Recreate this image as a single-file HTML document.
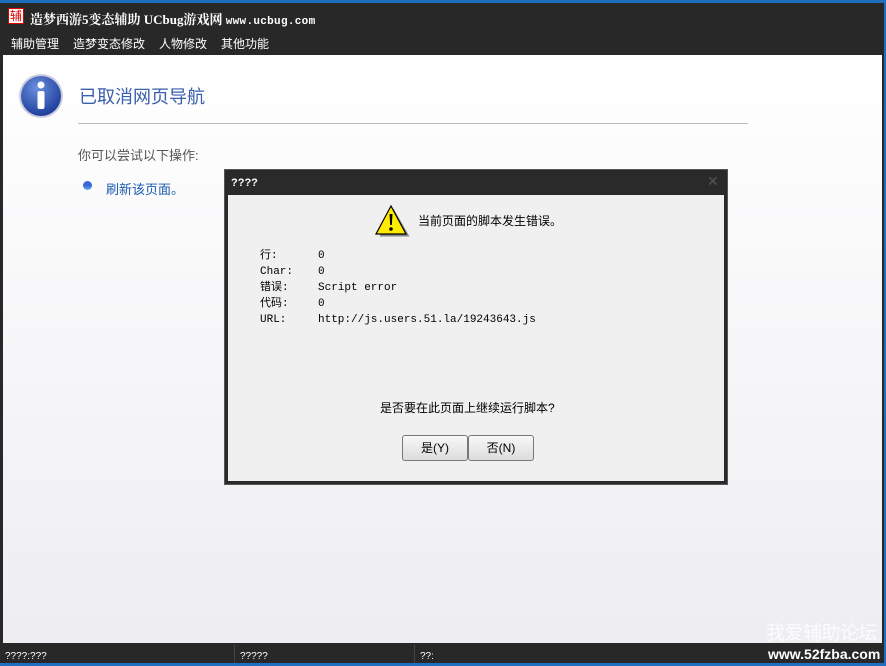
<!DOCTYPE html>
<html><head><meta charset="utf-8"><style>
*{margin:0;padding:0;box-sizing:border-box}
body{width:886px;height:666px;position:relative;overflow:hidden;background:#1e6fc0;font-family:"Liberation Sans","Noto Sans CJK SC",sans-serif}
.abs{position:absolute}
#win{left:0;top:3px;width:884px;height:660px;background:#282828}
#title{left:30px;top:9px;color:#fff;font-size:13px;font-weight:bold;font-family:"Liberation Serif","Noto Serif CJK SC",serif;white-space:nowrap}
#menu{left:11px;top:35px;color:#fff;font-size:12px;white-space:nowrap}
#menu span{margin-right:14px}
#content{left:3px;top:55px;width:879px;height:588px;background:linear-gradient(#fff,#eeeef2)}
#status{top:643px;height:20px;left:0;width:884px;color:#fff;font-size:10px}
.sb{position:absolute;top:8px}
.sep{position:absolute;top:2px;width:1px;height:18px;background:#444}
#dlg{left:224px;top:169px;width:504px;height:316px;background:#2a2a2a;border:1px solid #555}
#dbody{left:3px;top:25px;width:496px;height:286px;background:#f0f0f0}
.m{font-family:"Liberation Mono","Noto Sans CJK SC",monospace;font-size:11px;color:#000}
.btn{position:absolute;top:240px;width:66px;height:26px;border:1px solid #777;border-radius:3px;background:linear-gradient(#f8f8f8,#dcdcdc);font-size:12px;text-align:center;line-height:24px}
</style></head><body>
<div id="win" class="abs"></div>
<div class="abs" style="left:8px;top:8px;width:16px;height:16px;border:1px solid #d00;background:#fff;color:#d00;font-size:12px;line-height:14px;text-align:center">辅</div>
<div id="title" class="abs">造梦西游5变态辅助 UCbug游戏网 <span style="font-family:'Liberation Mono',monospace;font-size:11px;letter-spacing:0.3px">www.ucbug.com</span></div>
<div id="menu" class="abs"><span>辅助管理</span><span>造梦变态修改</span><span>人物修改</span><span>其他功能</span></div>
<div id="content" class="abs">
 <svg class="abs" style="left:15px;top:18px" width="46" height="46" viewBox="0 0 46 46"><defs><radialGradient id="g" cx="40%" cy="30%" r="70%"><stop offset="0" stop-color="#6a8fe0"/><stop offset="1" stop-color="#1e3f9a"/></radialGradient></defs><circle cx="23" cy="23" r="22" fill="#ccd" /><circle cx="23" cy="23" r="20" fill="url(#g)"/><circle cx="23" cy="12" r="3.5" fill="#fff"/><rect x="19.5" y="18" width="7" height="18" rx="2" fill="#fff"/></svg>
 <div class="abs" style="left:76px;top:28px;font-size:18px;color:#3a5fae">已取消网页导航</div>
 <div class="abs" style="left:75px;top:68px;width:670px;height:1px;background:#bbb"></div>
 <div class="abs" style="left:75px;top:90px;font-size:13px;color:#555">你可以尝试以下操作:</div>
 <div class="abs" style="left:80px;top:126px;width:9px;height:9px;border-radius:50%;background:linear-gradient(#3a66d8,#3a66d8 50%,#6ab0e8)"></div>
 <div class="abs" style="left:103px;top:124px;font-size:13px;color:#1a5bb0">刷新该页面。</div>
 <div class="abs" style="left:763px;top:563px;font-size:19px;color:#fff;opacity:.85;letter-spacing:-0.5px">我爱辅助论坛</div>
</div>
<div id="status" class="abs"><span class="sb" style="left:5px">????:???</span><div class="sep" style="left:234px"></div><span class="sb" style="left:240px">?????</span><div class="sep" style="left:414px"></div><span class="sb" style="left:420px">??:</span><span class="sb" style="left:768px;top:3px;font-size:14px;font-weight:bold;letter-spacing:0px">www.52fzba.com</span></div>
<div id="dlg" class="abs">
 <div class="abs" style="left:6px;top:7px;color:#fff;font-size:11px;font-weight:bold">????</div>
 <div class="abs" style="left:482px;top:3px;color:#555;font-size:14px">✕</div>
 <div id="dbody" class="abs">
  <svg class="abs" style="left:146px;top:9px" width="36" height="34" viewBox="0 0 36 34"><path d="M18 3 L34 31 L4 31 Z" fill="#888" transform="translate(1.5,1.5)"/><path d="M17 2 L32 30 L2 30 Z" fill="#ffec00" stroke="#000" stroke-width="1.2"/><path d="M15.5 10 h3 l-0.7 11 h-1.6 z" fill="#000"/><circle cx="17" cy="25" r="1.8" fill="#000"/></svg>
  <div class="abs" style="left:190px;top:17px;font-size:12px">当前页面的脚本发生错误。</div>
  <div class="abs m" style="left:32px;top:53px;line-height:16px">行:<br>Char:<br>错误:<br>代码:<br>URL:</div>
  <div class="abs m" style="left:90px;top:53px;line-height:16px">0<br>0<br>Script error<br>0<br>http://js.users.51.la/19243643.js</div>
  <div class="abs" style="left:152px;top:204px;font-size:12px">是否要在此页面上继续运行脚本?</div>
  <div class="btn" style="left:174px">是(Y)</div>
  <div class="btn" style="left:240px">否(N)</div>
 </div>
</div>
</body></html>
